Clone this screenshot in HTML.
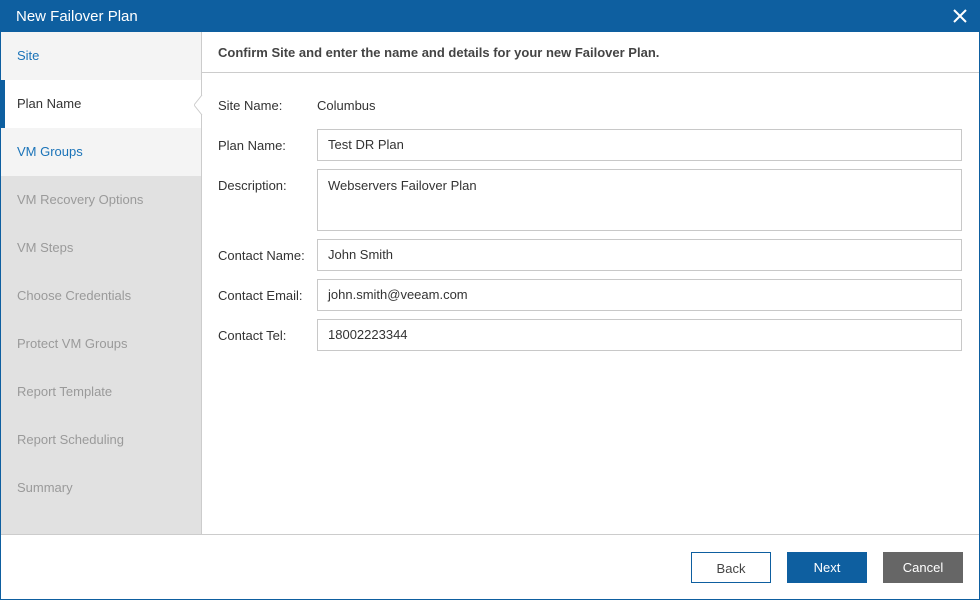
<!DOCTYPE html><html><head><style>
body{margin:0;width:980px;height:600px;overflow:hidden;font-family:"Liberation Sans",sans-serif;font-size:13px;color:#333}
.win{position:absolute;left:0;top:0;width:978px;height:598px;border:1px solid #0e5fa0;background:#fff}
.tb{position:absolute;left:-1px;top:-1px;width:980px;height:32px;background:#0e5fa0;color:#fff;font-size:15px}
.tb span{position:absolute;left:16px;top:8px}
.side{position:absolute;left:0;top:31px;width:200px;height:502px;background:#e1e1e1;border-right:1px solid #ccc}
.it{height:48px;line-height:48px;padding-left:16px;color:#9a9a9a}
.lbl{position:absolute;left:217px}
.in{position:absolute;left:316px;width:633px;height:30px;border:1px solid #c8c8c8;padding-left:10px;line-height:30px;box-sizing:content-box}
.btn{position:absolute;top:551px;width:80px;height:31px;line-height:31px;text-align:center;box-sizing:border-box}
</style></head><body><div class="win">
<div class="tb"><span>New Failover Plan</span>
<svg style="position:absolute;left:953px;top:9px" width="14" height="14"><path d="M1 1L13 13M13 1L1 13" stroke="#fff" stroke-width="2"/></svg></div>
<div class="side">
<div class="it" style="background:#f4f4f4;color:#1a73b8">Site</div>
<div class="it" style="background:#fff;color:#333;border-left:4px solid #0e5fa0;padding-left:12px">Plan Name</div>
<div class="it" style="background:#f4f4f4;color:#1a73b8">VM Groups</div>
<div class="it">VM Recovery Options</div><div class="it">VM Steps</div><div class="it">Choose Credentials</div><div class="it">Protect VM Groups</div><div class="it">Report Template</div><div class="it">Report Scheduling</div><div class="it">Summary</div>
</div>
<svg style="position:absolute;left:193px;top:94px" width="9" height="20"><path d="M8 0L0 10L8 20" fill="#fff" stroke="#ccc"/></svg>
<div style="position:absolute;left:217px;top:44px;font-weight:bold;color:#444">Confirm Site and enter the name and details for your new Failover Plan.</div>
<div style="position:absolute;left:201px;top:71px;width:777px;height:1px;background:#ccc"></div>
<div class="lbl" style="top:97px">Site Name:</div><div style="position:absolute;left:316px;top:97px">Columbus</div>
<div class="lbl" style="top:137px">Plan Name:</div><div class="in" style="top:128px">Test DR Plan</div>
<div class="lbl" style="top:177px">Description:</div><div class="in" style="top:168px;height:60px;line-height:32px">Webservers Failover Plan</div>
<div class="lbl" style="top:247px">Contact Name:</div><div class="in" style="top:238px">John Smith</div>
<div class="lbl" style="top:287px">Contact Email:</div><div class="in" style="top:278px">john.smith@veeam.com</div>
<div class="lbl" style="top:327px">Contact Tel:</div><div class="in" style="top:318px">18002223344</div>
<div style="position:absolute;left:0;top:533px;width:978px;height:1px;background:#ccc"></div>
<div class="btn" style="left:690px;border:1px solid #0e5fa0;color:#444">Back</div>
<div class="btn" style="left:786px;background:#0e5fa0;color:#fff">Next</div>
<div class="btn" style="left:882px;background:#666;color:#fff">Cancel</div>
</div></body></html>
